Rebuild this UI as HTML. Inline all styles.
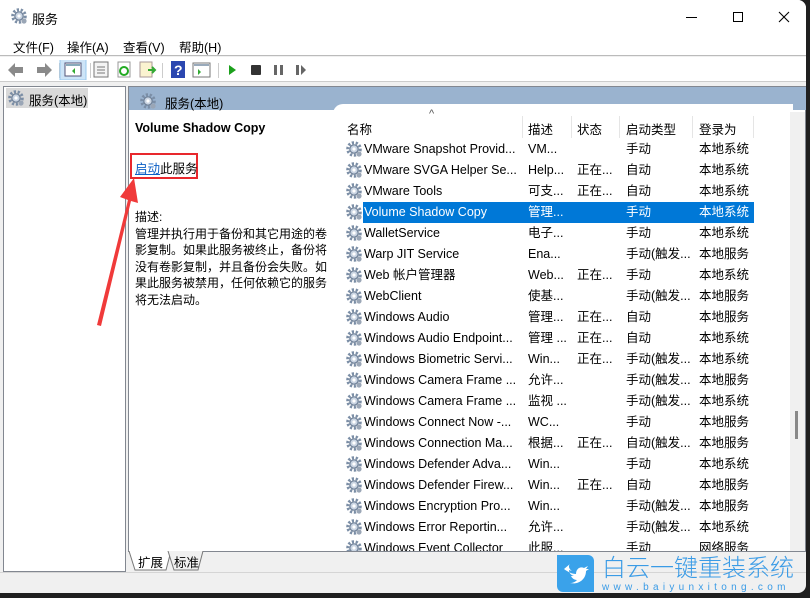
<!DOCTYPE html>
<html><head><meta charset="utf-8"><style>
*{margin:0;padding:0;box-sizing:border-box}
body{width:810px;height:598px;overflow:hidden;background:#1f1f1f;font-family:"Liberation Sans","Noto Sans CJK SC",sans-serif;font-size:12.5px;color:#000;position:relative}
.a{position:absolute}
#win{left:0;top:0;width:806px;height:593px;background:#f0f0f0;border-radius:0 8px 8px 0;overflow:hidden}
.row{position:absolute;left:0;width:420px;height:21px;line-height:21px;white-space:nowrap}
.row span{position:absolute;top:0}
.c1{left:31px}.c2{left:195px}.c3{left:244px}.c4{left:293px}.c5{left:366px}
.g{position:absolute;left:13px;top:2px}
.sel{background:#0078d7;color:#fff;width:420px}
</style></head><body>
<svg width="0" height="0" style="position:absolute"><defs>
<g id="gear"><circle cx="8" cy="8" r="6.3" fill="none" stroke="#7b8ea6" stroke-width="3" stroke-dasharray="2.2 1.7"/><circle cx="8" cy="8" r="4.2" fill="#c9d4e2" stroke="#6d7f96" stroke-width="1.2"/><circle cx="8" cy="8" r="1.6" fill="#fff"/><circle cx="13" cy="13" r="2.6" fill="#9aa6b6"/></g>
</defs></svg>
<div id="win" class="a">
<div class="a" style="left:0;top:0;width:806px;height:34px;background:#fff"></div>
<svg class="a" style="left:11px;top:8px" width="18" height="18"><use href="#gear"/></svg>
<div class="a" style="left:32px;top:9px;font-size:13px">服务</div>
<div class="a" style="left:686px;top:17px;width:11px;height:1px;background:#000"></div>
<div class="a" style="left:733px;top:12px;width:10px;height:10px;border:1px solid #000"></div>
<svg class="a" style="left:778px;top:11px" width="12" height="12"><path d="M1 1L11 11M11 1L1 11" stroke="#000" stroke-width="1.1"/></svg>
<div class="a" style="left:0;top:34px;width:806px;height:22px;background:#fff;border-bottom:1px solid #bbb"></div>
<div class="a" style="left:13px;top:37px">文件(F)</div>
<div class="a" style="left:67px;top:37px">操作(A)</div>
<div class="a" style="left:123px;top:37px">查看(V)</div>
<div class="a" style="left:179px;top:37px">帮助(H)</div>
<div class="a" style="left:0;top:57px;width:806px;height:25px;background:#fff;border-bottom:1px solid #ccc"></div>
<svg class="a" style="left:6px;top:60px" width="300" height="20">
<path d="M2 10L9 3V7H17V13H9V17Z" fill="#8a8a8a"/><path d="M46 10L39 3V7H31V13H39V17Z" fill="#8a8a8a"/>
<rect x="53" y="3" width="1" height="15" fill="#ccc"/>
<rect x="54" y="-1" width="26" height="21" fill="#cde4f7" stroke="#99c8ee"/>
<rect x="59" y="3" width="16" height="13" fill="#fff" stroke="#557"/><rect x="60" y="4" width="14" height="2" fill="#8ab"/><path d="M69 8v6l-3-3z" fill="#3a3"/>
<rect x="84" y="3" width="1" height="15" fill="#ccc"/>
<rect x="88" y="2" width="14" height="15" fill="#f4f4f4" stroke="#777"/><path d="M91 7h8M91 10h8M91 13h8" stroke="#777"/>
<rect x="112" y="2" width="12" height="15" fill="#fff" stroke="#999"/><circle cx="118" cy="11" r="4" fill="none" stroke="#2a2" stroke-width="2"/>
<rect x="134" y="2" width="12" height="15" fill="#fbf3d0" stroke="#a99"/><path d="M142 10h7M146 7l3 3-3 3" stroke="#3a3" stroke-width="2" fill="none"/>
<rect x="156" y="3" width="1" height="15" fill="#ccc"/>
<rect x="165" y="1" width="14" height="17" fill="#2b47b0"/><text x="168" y="15" fill="#fff" font-size="14" font-weight="bold">?</text>
<rect x="187" y="3" width="17" height="14" fill="#fff" stroke="#777"/><rect x="188" y="4" width="15" height="2" fill="#9ab"/><path d="M192 9v6l3-3z" fill="#3a3"/>
<rect x="212" y="3" width="1" height="15" fill="#ccc"/>
<path d="M223 5v10l7-5z" fill="#1ca01c"/>
<rect x="245" y="5" width="10" height="10" fill="#333" rx="1"/>
<rect x="268" y="5" width="3" height="10" fill="#666"/><rect x="274" y="5" width="3" height="10" fill="#666"/>
<rect x="290" y="5" width="3" height="10" fill="#666"/><path d="M295 5v10l5-5z" fill="#666"/>
</svg>
<div class="a" style="left:3px;top:86px;width:123px;height:486px;background:#fff;border:1px solid #828790"></div>
<div class="a" style="left:6px;top:88px;width:82px;height:20px;background:#d9d9d9"></div>
<svg class="a" style="left:8px;top:90px" width="17" height="17"><use href="#gear"/></svg>
<div class="a" style="left:29px;top:90px">服务(本地)</div>
<div class="a" style="left:128px;top:86px;width:678px;height:466px;background:#fff;border:1px solid #828790"></div>
<div class="a" style="left:129px;top:87px;width:677px;height:23px;background:#9ab3cf"></div>
<svg class="a" style="left:140px;top:93px" width="17" height="17"><use href="#gear"/></svg>
<div class="a" style="left:165px;top:93px">服务(本地)</div>
<div class="a" style="left:333px;top:104px;width:460px;height:20px;background:#fff;border-radius:10px 0 0 0"></div>
<div class="a" style="left:135px;top:121px;font-weight:bold;font-size:12.5px">Volume Shadow Copy</div>
<div class="a" style="left:130px;top:153px;width:68px;height:26px;border:2px solid #e8282d"></div>
<div class="a" style="left:135px;top:158px"><span style="color:#0b5fc6;text-decoration:underline">启动</span>此服务</div>
<div class="a" style="left:135px;top:209px;width:198px;line-height:16.5px;font-size:12px">描述:<br>管理并执行用于备份和其它用途的卷影复制。如果此服务被终止，备份将没有卷影复制，并且备份会失败。如果此服务被禁用，任何依赖它的服务将无法启动。</div>
<svg class="a" style="left:88px;top:175px" width="55" height="155"><path d="M9 150L40 25L32 22L46 3L50 28L43 26L13 151Z" fill="#f03a3a"/></svg>
<div class="a" style="left:333px;top:115px;width:457px;height:23px;background:#fff"></div>
<div class="a" style="left:429px;top:108px;font-size:11px;color:#555">^</div>
<div class="a" style="left:347px;top:119px">名称</div>
<div class="a" style="left:522px;top:116px;width:1px;height:22px;background:#e5e5e5"></div>
<div class="a" style="left:528px;top:119px">描述</div>
<div class="a" style="left:571px;top:116px;width:1px;height:22px;background:#e5e5e5"></div>
<div class="a" style="left:577px;top:119px">状态</div>
<div class="a" style="left:619px;top:116px;width:1px;height:22px;background:#e5e5e5"></div>
<div class="a" style="left:626px;top:119px">启动类型</div>
<div class="a" style="left:692px;top:116px;width:1px;height:22px;background:#e5e5e5"></div>
<div class="a" style="left:699px;top:119px">登录为</div>
<div class="a" style="left:753px;top:116px;width:1px;height:22px;background:#e5e5e5"></div>
<div class="a" style="left:790px;top:112px;width:15px;height:439px;background:#f0f0f0"></div>
<div class="a" style="left:795px;top:411px;width:3px;height:28px;background:#888"></div>
<div class="a" style="left:333px;top:139px;width:457px;height:412px;overflow:hidden">
<div class="row" style="top:0"><svg class="g" width="17" height="17"><use href="#gear"/></svg><span class="c1">VMware Snapshot Provid...</span><span class="c2">VM...</span><span class="c4">手动</span><span class="c5">本地系统</span></div>
<div class="row" style="top:21px"><svg class="g" width="17" height="17"><use href="#gear"/></svg><span class="c1">VMware SVGA Helper Se...</span><span class="c2">Help...</span><span class="c3">正在...</span><span class="c4">自动</span><span class="c5">本地系统</span></div>
<div class="row" style="top:42px"><svg class="g" width="17" height="17"><use href="#gear"/></svg><span class="c1">VMware Tools</span><span class="c2">可支...</span><span class="c3">正在...</span><span class="c4">自动</span><span class="c5">本地系统</span></div>
<div class="row" style="top:63px"><svg class="g" width="17" height="17"><use href="#gear"/></svg><div class="a sel" style="left:30px;top:0;width:391px;height:21px"></div><span class="c1" style="color:#fff">Volume Shadow Copy</span><span class="c2" style="color:#fff">管理...</span><span class="c4" style="color:#fff">手动</span><span class="c5" style="color:#fff">本地系统</span></div>
<div class="row" style="top:84px"><svg class="g" width="17" height="17"><use href="#gear"/></svg><span class="c1">WalletService</span><span class="c2">电子...</span><span class="c4">手动</span><span class="c5">本地系统</span></div>
<div class="row" style="top:105px"><svg class="g" width="17" height="17"><use href="#gear"/></svg><span class="c1">Warp JIT Service</span><span class="c2">Ena...</span><span class="c4">手动(触发...</span><span class="c5">本地服务</span></div>
<div class="row" style="top:126px"><svg class="g" width="17" height="17"><use href="#gear"/></svg><span class="c1">Web 帐户管理器</span><span class="c2">Web...</span><span class="c3">正在...</span><span class="c4">手动</span><span class="c5">本地系统</span></div>
<div class="row" style="top:147px"><svg class="g" width="17" height="17"><use href="#gear"/></svg><span class="c1">WebClient</span><span class="c2">使基...</span><span class="c4">手动(触发...</span><span class="c5">本地服务</span></div>
<div class="row" style="top:168px"><svg class="g" width="17" height="17"><use href="#gear"/></svg><span class="c1">Windows Audio</span><span class="c2">管理...</span><span class="c3">正在...</span><span class="c4">自动</span><span class="c5">本地服务</span></div>
<div class="row" style="top:189px"><svg class="g" width="17" height="17"><use href="#gear"/></svg><span class="c1">Windows Audio Endpoint...</span><span class="c2">管理 ...</span><span class="c3">正在...</span><span class="c4">自动</span><span class="c5">本地系统</span></div>
<div class="row" style="top:210px"><svg class="g" width="17" height="17"><use href="#gear"/></svg><span class="c1">Windows Biometric Servi...</span><span class="c2">Win...</span><span class="c3">正在...</span><span class="c4">手动(触发...</span><span class="c5">本地系统</span></div>
<div class="row" style="top:231px"><svg class="g" width="17" height="17"><use href="#gear"/></svg><span class="c1">Windows Camera Frame ...</span><span class="c2">允许...</span><span class="c4">手动(触发...</span><span class="c5">本地服务</span></div>
<div class="row" style="top:252px"><svg class="g" width="17" height="17"><use href="#gear"/></svg><span class="c1">Windows Camera Frame ...</span><span class="c2">监视 ...</span><span class="c4">手动(触发...</span><span class="c5">本地系统</span></div>
<div class="row" style="top:273px"><svg class="g" width="17" height="17"><use href="#gear"/></svg><span class="c1">Windows Connect Now -...</span><span class="c2">WC...</span><span class="c4">手动</span><span class="c5">本地服务</span></div>
<div class="row" style="top:294px"><svg class="g" width="17" height="17"><use href="#gear"/></svg><span class="c1">Windows Connection Ma...</span><span class="c2">根据...</span><span class="c3">正在...</span><span class="c4">自动(触发...</span><span class="c5">本地服务</span></div>
<div class="row" style="top:315px"><svg class="g" width="17" height="17"><use href="#gear"/></svg><span class="c1">Windows Defender Adva...</span><span class="c2">Win...</span><span class="c4">手动</span><span class="c5">本地系统</span></div>
<div class="row" style="top:336px"><svg class="g" width="17" height="17"><use href="#gear"/></svg><span class="c1">Windows Defender Firew...</span><span class="c2">Win...</span><span class="c3">正在...</span><span class="c4">自动</span><span class="c5">本地服务</span></div>
<div class="row" style="top:357px"><svg class="g" width="17" height="17"><use href="#gear"/></svg><span class="c1">Windows Encryption Pro...</span><span class="c2">Win...</span><span class="c4">手动(触发...</span><span class="c5">本地服务</span></div>
<div class="row" style="top:378px"><svg class="g" width="17" height="17"><use href="#gear"/></svg><span class="c1">Windows Error Reportin...</span><span class="c2">允许...</span><span class="c4">手动(触发...</span><span class="c5">本地系统</span></div>
<div class="row" style="top:399px"><svg class="g" width="17" height="17"><use href="#gear"/></svg><span class="c1">Windows Event Collector</span><span class="c2">此服...</span><span class="c4">手动</span><span class="c5">网络服务</span></div>
</div>
<svg class="a" style="left:128px;top:551px" width="90" height="21"><path d="M1 0L7 19H38L43 0" fill="#fff" stroke="#777"/><path d="M40 0L46 19H70L75 0" fill="#f0f0f0" stroke="#777"/></svg>
<div class="a" style="left:138px;top:552px">扩展</div>
<div class="a" style="left:174px;top:552px">标准</div>
<div class="a" style="left:0;top:572px;width:806px;height:1px;background:#d5d5d5"></div>
<div class="a" style="left:557px;top:555px;width:37px;height:37px;background:#3aa2ea;border-radius:0 6px 0 6px"></div>
<svg class="a" style="left:561px;top:560px" width="30" height="28"><path d="M3 9c4 3 8 5 12 5c0-5 4-8 8-6l4-2l-2 3l3 0l-3 2c0 8-7 14-16 12c3 0 5-1 7-3c-3 0-5-2-6-4h3c-3-1-5-3-5-6l3 1c-3-2-4-5-2-7z" fill="#fff"/></svg>
<div class="a" style="left:602px;top:552px;font-size:24px;line-height:28px;color:#3a9be6;letter-spacing:0;font-family:'Noto Sans CJK SC',sans-serif;font-weight:300;white-space:nowrap">白云一键重装系统</div>
<div class="a" style="left:602px;top:582px;font-size:10px;line-height:11px;color:#3a9be6;letter-spacing:4.3px;white-space:nowrap">www.baiyunxitong.com</div>
</div>
</body></html>
